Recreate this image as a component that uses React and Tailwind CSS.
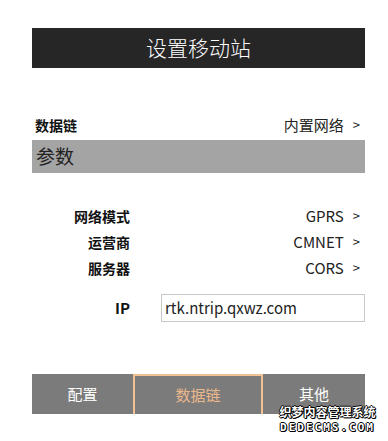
import React from 'react';

const font = { fontFamily: '"Microsoft YaHei", "Noto Sans CJK SC", "Open Sans", sans-serif' };

const outline = '1px 0 0 #000, -1px 0 0 #000, 0 1px 0 #000, 0 -1px 0 #000, 1px 1px 0 #000';

const Row = ({ label, value }) => (
  <div className="flex items-center h-[26px]">
    <div className="w-[98px] text-right text-[14px] font-bold text-[#111]">{label}</div>
    <div className="flex-1 flex justify-end items-center pr-[5px] text-[15px] text-[#222]">
      <span>{value}</span>
      <span className="ml-[9px] text-[13px]">&gt;</span>
    </div>
  </div>
);

const App = () => {
  return (
    <div className="relative w-[388px] h-[441px] bg-white overflow-hidden" style={font}>
      <div className="ml-[32px] w-[333px] pt-[28px]">
        <div className="h-[40px] bg-[#262626] flex items-center justify-center text-white text-[21px] font-light">
          设置移动站
        </div>

        <div className="mt-[47px] flex items-center justify-between h-[20px] pl-[3px] pr-[5px]">
          <span className="text-[14px] font-bold text-[#111]">数据链</span>
          <span className="flex items-center text-[15px] text-[#222]">
            内置网络<span className="ml-[9px] text-[13px]">&gt;</span>
          </span>
        </div>

        <div className="mt-[5px] h-[33px] bg-[#a4a4a4] flex items-center pl-[4px] text-[19px] text-[#222]">
          参数
        </div>

        <div className="mt-[30px]">
          <Row label="网络模式" value="GPRS" />
          <Row label="运营商" value="CMNET" />
          <Row label="服务器" value="CORS" />
        </div>

        <div className="mt-[13px] flex items-center">
          <div className="w-[98px] text-right text-[15px] font-bold text-[#111]">IP</div>
          <div className="ml-[31px] flex-1 h-[28px] border border-[#c8c8c8] flex items-center pl-[3px] text-[15px] text-[#222]">
            rtk.ntrip.qxwz.com
          </div>
        </div>

        <div className="mt-[52px] h-[40px] flex bg-[#7b7b7b] text-[15px]">
          <div className="w-[101px] flex items-center justify-center text-white">配置</div>
          <div className="w-[130px] flex items-center justify-center text-[#ebb88c] border-x-2 border-t-2 border-[#f4c290]">
            数据链
          </div>
          <div className="flex-1 flex items-center justify-center text-white">其他</div>
        </div>
      </div>

      <div className="absolute left-[278px] top-[406px] w-[99px] flex flex-col items-center leading-none">
        <span className="text-[12px] font-bold text-white" style={{ textShadow: outline }}>
          织梦内容管理系统
        </span>
        <span
          className="mt-[4px] text-[11px] font-bold text-white tracking-[2px]"
          style={{ fontFamily: '"DejaVu Sans Mono", monospace', textShadow: outline }}
        >
          DEDECMS.COM
        </span>
      </div>
    </div>
  );
};

export default App;
